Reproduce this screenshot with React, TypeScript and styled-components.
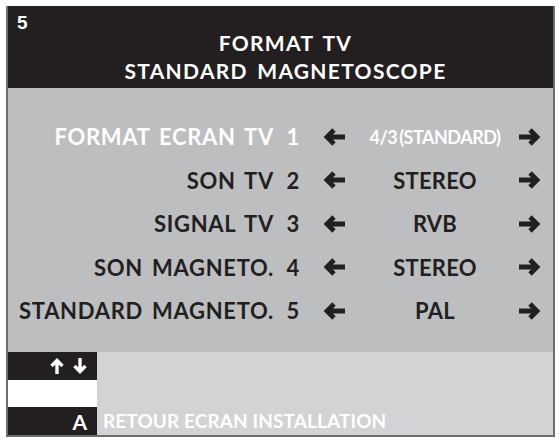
import React from "react";
import styled, { createGlobalStyle } from "styled-components";

const GlobalStyle = createGlobalStyle`
  html, body {
    margin: 0;
    padding: 0;
    background: #ffffff;
  }
  body {
    font-family: Lato, "Open Sans", sans-serif;
  }
`;

const Frame = styled.div`
  margin: 6px 0 0 6px;
  width: 549px;
  height: 431px;
  display: flex;
  flex-direction: column;
  box-sizing: border-box;
  border-left: 2px solid #6d6e71;
  border-right: 2px solid #6d6e71;
  border-bottom: 2px solid #6d6e71;
`;

const Header = styled.header`
  position: relative;
  height: 82px;
  background: #231f20;
  color: #ffffff;
  display: flex;
  flex-direction: column;
  align-items: center;
  justify-content: center;
  padding: 20px 0 0 10px;
  box-sizing: border-box;
`;

const PageNumber = styled.span`
  position: absolute;
  left: 9px;
  top: 6px;
  font-family: "Liberation Sans", Arial, sans-serif;
  font-weight: 700;
  font-size: 19px;
`;

const TitleLine = styled.div`
  font-weight: 700;
  font-size: 21px;
  line-height: 28px;
  letter-spacing: 1.3px;
  word-spacing: 3px;
`;

const Main = styled.main`
  height: 264px;
  background: #bcbec0;
  padding-top: 27px;
  box-sizing: border-box;
`;

const Row = styled.div<{ $active?: boolean }>`
  display: grid;
  grid-template-columns: 270px 30px 52px 150px 40px;
  height: 43.5px;
  align-items: center;
  color: ${(p) => (p.$active ? "#ffffff" : "#231f20")};
  font-weight: 700;
  font-size: 22px;
  letter-spacing: 0.7px;
  word-spacing: 3px;
`;

const Label = styled.span`
  text-align: right;
  padding-right: 4px;
  white-space: nowrap;
`;

const Num = styled.span`
  text-align: center;
  letter-spacing: 0;
`;

const ArrowCell = styled.span`
  display: flex;
  justify-content: center;
  align-items: center;
`;

const Value = styled.span<{ $narrow?: boolean }>`
  text-align: center;
  white-space: nowrap;
  font-size: ${(p) => (p.$narrow ? "18px" : "22px")};
  letter-spacing: ${(p) => (p.$narrow ? "-0.5px" : "0.2px")};
  word-spacing: ${(p) => (p.$narrow ? "-2px" : "0")};
`;

const Footer = styled.footer`
  flex: 1;
  display: grid;
  grid-template-columns: 89px 1fr;
  background: #d1d3d4;
`;

const KeyColumn = styled.div`
  display: grid;
  grid-template-rows: 28px 27px 1fr;
`;

const KeyCell = styled.div<{ $blank?: boolean }>`
  background: ${(p) => (p.$blank ? "#ffffff" : "#231f20")};
  color: #ffffff;
  display: flex;
  align-items: center;
  justify-content: flex-end;
  gap: 9px;
  padding-right: 10px;
  font-weight: 700;
  font-size: 21px;
`;

const Hint = styled.div`
  display: flex;
  align-items: flex-end;
  padding: 0 0 3px 6px;
  color: #ffffff;
  font-weight: 700;
  font-size: 19px;
  letter-spacing: 0.1px;
`;

const Arrow = ({ dir, color }: { dir: "left" | "right"; color: string }) => (
  <svg
    width="24"
    height="18"
    viewBox="0 0 24 18"
    style={{ transform: dir === "right" ? "rotate(180deg)" : undefined }}
  >
    <path
      d="M12 2 L5 9 L12 16 M5.5 9 H23"
      fill="none"
      stroke={color}
      strokeWidth="4.8"
      strokeLinejoin="miter"
    />
  </svg>
);

const SmallArrow = ({ dir }: { dir: "up" | "down" }) => (
  <svg
    width="14"
    height="16"
    viewBox="0 0 14 16"
    style={{ transform: dir === "down" ? "rotate(180deg)" : undefined }}
  >
    <path d="M1.5 8 L7 2.5 L12.5 8 M7 3 V16" fill="none" stroke="#ffffff" strokeWidth="3.4" />
  </svg>
);

const rows = [
  { label: "FORMAT ECRAN TV", n: 1, value: "4/3 (STANDARD)", active: true },
  { label: "SON TV", n: 2, value: "STEREO" },
  { label: "SIGNAL TV", n: 3, value: "RVB" },
  { label: "SON MAGNETO.", n: 4, value: "STEREO" },
  { label: "STANDARD MAGNETO.", n: 5, value: "PAL" },
];

export default function App() {
  return (
    <>
      <GlobalStyle />
      <Frame>
        <Header>
          <PageNumber>5</PageNumber>
          <TitleLine>FORMAT TV</TitleLine>
          <TitleLine>STANDARD MAGNETOSCOPE</TitleLine>
        </Header>
        <Main>
          {rows.map((r) => (
            <Row key={r.n} $active={r.active}>
              <Label>{r.label}</Label>
              <Num>{r.n}</Num>
              <ArrowCell>
                <Arrow dir="left" color="#231f20" />
              </ArrowCell>
              <Value $narrow={r.active}>{r.value}</Value>
              <ArrowCell>
                <Arrow dir="right" color="#231f20" />
              </ArrowCell>
            </Row>
          ))}
        </Main>
        <Footer>
          <KeyColumn>
            <KeyCell>
              <SmallArrow dir="up" />
              <SmallArrow dir="down" />
            </KeyCell>
            <KeyCell $blank />
            <KeyCell>A</KeyCell>
          </KeyColumn>
          <Hint>RETOUR ECRAN INSTALLATION</Hint>
        </Footer>
      </Frame>
    </>
  );
}
